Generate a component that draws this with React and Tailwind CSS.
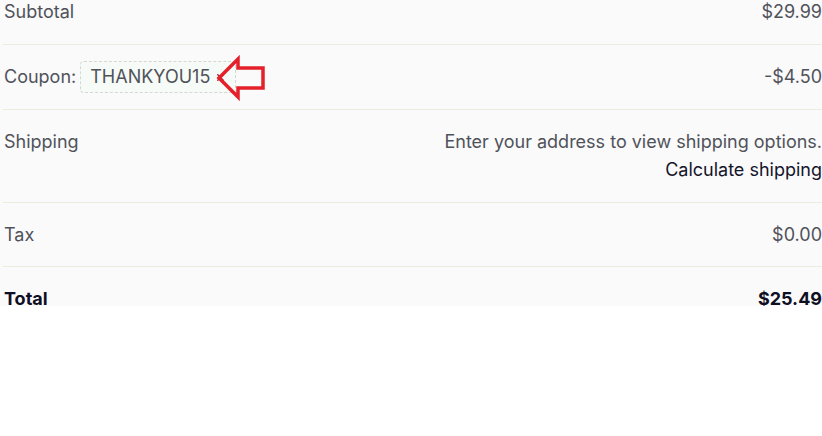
import { X } from "lucide-react";

const ROW = "flex justify-between border-b border-[#ecebdd] pt-[18px] leading-[28px]";

function CouponArrow() {
  return (
    <svg
      className="absolute left-[211px] top-[10px] pointer-events-none"
      width="54"
      height="46"
      viewBox="211 54 54 46"
    >
      <polygon
        points="216,77 235,58 235,67 260,67 260,87 235,87 235,96"
        fill="none"
        stroke="#e5202a"
        strokeWidth="3.5"
        strokeLinejoin="miter"
      />
    </svg>
  );
}

export default function App() {
  return (
    <div className="bg-white w-[822px] h-[436px]" style={{ fontFamily: "Inter, 'Noto Sans', sans-serif" }}>
      <div className="bg-[#fafafa] h-[306px] overflow-hidden pl-[3px] text-[18px] text-[#50525a]">
        {/* Subtotal */}
        <div className={`${ROW} pb-[18px] -mt-[20px]`}>
          <span className="pl-px">Subtotal</span>
          <span>$29.99</span>
        </div>

        {/* Coupon */}
        <div className={`${ROW} pb-[18px] relative`}>
          <div className="flex items-center gap-[4px] pl-px">
            <span>Coupon:</span>
            <span className="flex items-center h-[32px] -my-[2px] pl-[9px] pr-[9px] border border-dashed border-[#d3d8d3] rounded-[4px] bg-[#f6fbf7]">
              THANKYOU15
              <X className="ml-[5px] w-[11px] h-[11px] text-[#9b1f45]" strokeWidth={3} />
            </span>
          </div>
          <span>-$4.50</span>
          <CouponArrow />
        </div>

        {/* Shipping */}
        <div className={`${ROW} pb-[18px]`}>
          <span className="pl-px">Shipping</span>
          <div className="flex flex-col items-end">
            <span>Enter your address to view shipping options.</span>
            <span className="text-[#14142b]">Calculate shipping</span>
          </div>
        </div>

        {/* Tax */}
        <div className={`${ROW} pb-[17px]`}>
          <span className="pl-px">Tax</span>
          <span>$0.00</span>
        </div>

        {/* Total */}
        <div className="flex justify-between py-[18px] leading-[28px] font-bold text-[#0f0f24]">
          <span className="pl-px">Total</span>
          <span>$25.49</span>
        </div>
      </div>
    </div>
  );
}
